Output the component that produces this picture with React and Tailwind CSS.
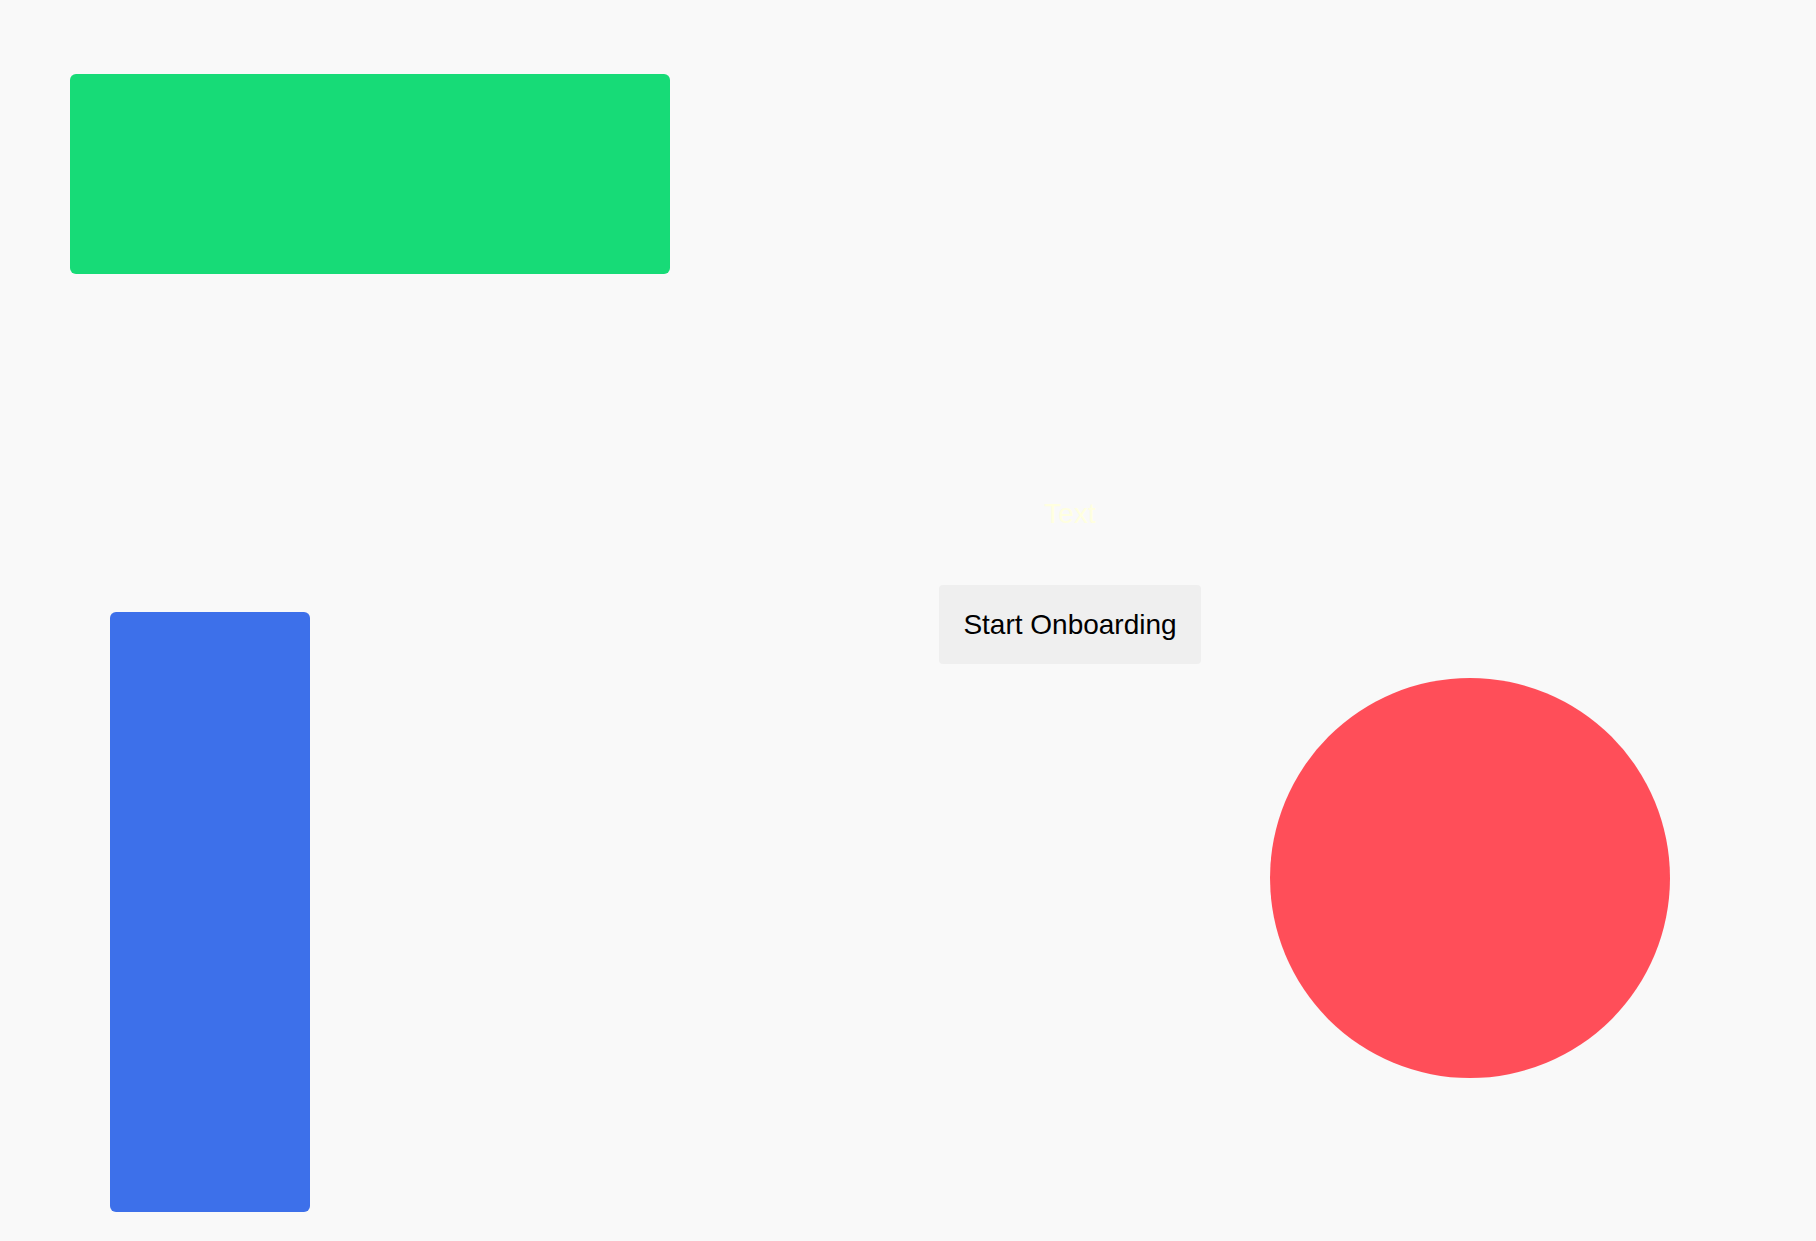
export default function App() {
  return (
    <div className="relative w-full h-[1241px] overflow-hidden bg-[#f9f9f9] font-['Liberation_Sans',Arial,sans-serif]">
      <div className="absolute left-[70px] top-[74px] w-[600px] h-[200px] rounded-[6px] bg-[#17db77]" />
      <div className="absolute left-[110px] top-[612px] w-[200px] h-[600px] rounded-[6px] bg-[#3d70ea]" />
      <div className="absolute left-[1270px] top-[678px] w-[400px] h-[400px] rounded-full bg-[#ff4e59]" />
      <div className="flex flex-col items-center pt-[498px] pl-[324px]">
        <div className="text-[28px] leading-[32px] text-[#ffffe0]">Text</div>
        <button className="mt-[55px] flex h-[79px] w-[262px] items-center justify-center rounded-[4px] bg-[#efefef] text-[28px] leading-[32px] text-black">
          Start Onboarding
        </button>
      </div>
    </div>
  );
}
